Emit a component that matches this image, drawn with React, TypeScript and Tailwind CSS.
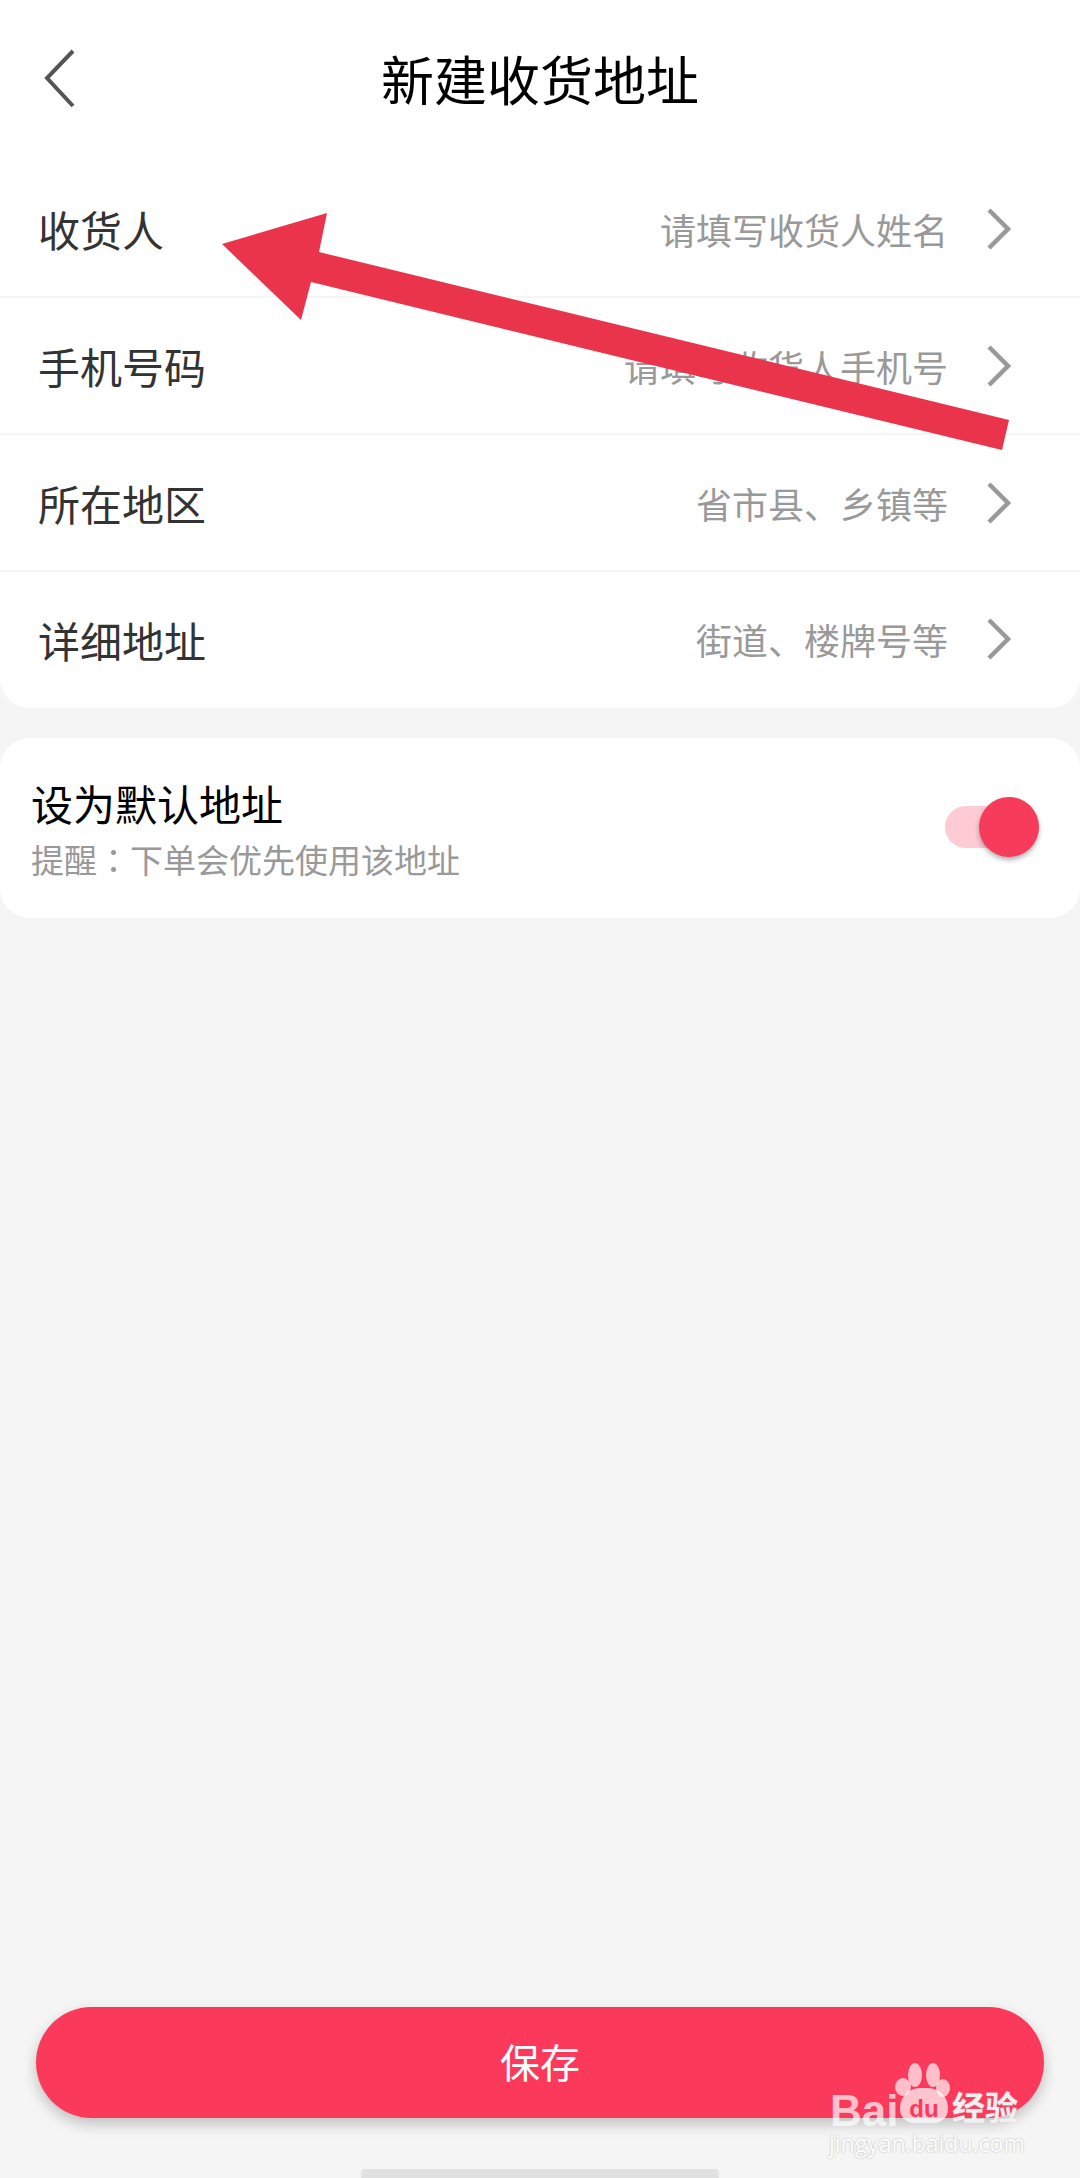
import React from "react";

// one row of the address form
interface Field {
  label: string;
  hint: string;
}

const fields: Field[] = [
  { label: "收货人", hint: "请填写收货人姓名" },
  { label: "手机号码", hint: "请填写收货人手机号" },
  { label: "所在地区", hint: "省市县、乡镇等" },
  { label: "详细地址", hint: "街道、楼牌号等" },
];

const Chevron = () => (
  <svg width="26" height="44" viewBox="0 0 26 44" fill="none" className="ml-[38px] shrink-0">
    <path d="M3 3 L22 22 L3 41" stroke="#999999" strokeWidth="4.5" />
  </svg>
);

const FieldRow = ({ field, last }: { field: Field; last: boolean }) => (
  <div
    className={`flex items-center pl-[38px] pr-[68px] ${
      last ? "h-[136px] pb-[2px]" : "h-[137px] border-b-2 border-[#f5f5f5]"
    }`}
  >
    <span className="text-[42px] text-[#333333]">{field.label}</span>
    <span className="ml-auto text-[36px] text-[#999999]">{field.hint}</span>
    <Chevron />
  </div>
);

const App: React.FC = () => {
  return (
    <div
      className="relative flex flex-col w-[1080px] h-[2178px] overflow-hidden bg-[#f5f5f5]"
      style={{ fontFamily: '"Noto Sans CJK SC", "Noto Sans", sans-serif' }}
    >
      {/* header */}
      <div className="relative flex items-center justify-center h-[161px] pb-[4px] bg-white">
        <svg width="34" height="60" viewBox="0 0 34 60" fill="none" className="absolute left-[43px] top-[49px]">
          <path d="M30 2 L4 29 L30 57" stroke="#555555" strokeWidth="4" />
        </svg>
        <h1 className="text-[53px] text-black font-normal">新建收货地址</h1>
      </div>

      {/* address fields */}
      <div className="bg-white rounded-b-[30px]">
        {fields.map((field, i) => (
          <FieldRow key={field.label} field={field} last={i === fields.length - 1} />
        ))}
      </div>

      {/* default address switch */}
      <div className="flex items-center justify-between h-[180px] mt-[30px] pl-[31px] pr-[41px] bg-white rounded-[30px]">
        <div className="flex flex-col">
          <span className="text-[42px] leading-[54px] text-black">设为默认地址</span>
          <span className="mt-[7px] text-[33px] leading-[44px] text-[#999999]">
            提醒<span className="font-['Noto_Sans_CJK_TC']">：</span>下单会优先使用该地址
          </span>
        </div>
        <div className="relative flex items-center w-[94px] h-[60px] mb-[2px]">
          <div className="w-[66px] h-[42px] rounded-full bg-[#fecad3]" />
          <div className="absolute right-0 top-0 w-[60px] h-[60px] rounded-full bg-[#f73b5b] shadow-[0_3px_5px_rgba(0,0,0,0.3)]" />
        </div>
      </div>

      {/* save button */}
      <div className="mt-auto mb-[60px] mx-[36px]">
        <button className="w-full h-[111px] pb-[3px] rounded-full bg-[#fb3a5b] text-white text-[40px] shadow-[0_6px_14px_rgba(0,0,0,0.22)]">
          保存
        </button>
      </div>

      {/* home indicator */}
      <div className="absolute left-[361px] bottom-0 w-[358px] h-[9px] rounded-t-[4px] bg-[#e1e1e1]" />

      {/* red annotation arrow */}
      <svg width="1080" height="500" viewBox="0 0 1080 500" className="absolute left-0 top-0 pointer-events-none">
        <polygon
          points="222,244 327,213 319,252 1009,420 1002,450 311,282 301,320"
          fill="#e9344b"
        />
      </svg>

      {/* watermark */}
      <div className="absolute left-[828px] top-[2063px] w-[200px] h-[92px] pointer-events-none">
        <svg width="60" height="36" viewBox="0 0 60 36" className="absolute left-[67px] top-0">
          <g fill="#ffffff" fillOpacity="0.68">
            <ellipse cx="20" cy="12" rx="7" ry="12" />
            <ellipse cx="38" cy="12" rx="7" ry="12" />
            <ellipse cx="8" cy="24" rx="8" ry="9" />
            <ellipse cx="48" cy="25" rx="7" ry="9" />
          </g>
        </svg>
        <span
          className="absolute left-[2px] top-[29px] text-[44px] leading-[38px] font-bold text-white/70"
          style={{ fontFamily: '"Liberation Sans", sans-serif' }}
        >
          Bai
        </span>
        <div className="absolute left-[72px] top-[25px] flex items-end justify-center w-[48px] h-[35px] pb-[2px] rounded-t-[20px] rounded-b-[14px] bg-white/70">
          <span
            className="text-[24px] leading-[24px] font-bold text-[#fb3a5b]"
            style={{ fontFamily: '"Liberation Sans", sans-serif' }}
          >
            du
          </span>
        </div>
        <span className="absolute left-[124px] top-[23px] text-[33px] leading-[40px] font-bold text-white/70 [text-shadow:0_0_1px_#d0d0d0]">
          经验
        </span>
        <span
          className="absolute left-[1px] top-[69px] text-[23px] leading-[23px] text-white [text-shadow:0_0_2px_#a8a8a8]"
          style={{ fontFamily: '"Open Sans", sans-serif' }}
        >
          jingyan.baidu.com
        </span>
      </div>
    </div>
  );
};

export default App;
